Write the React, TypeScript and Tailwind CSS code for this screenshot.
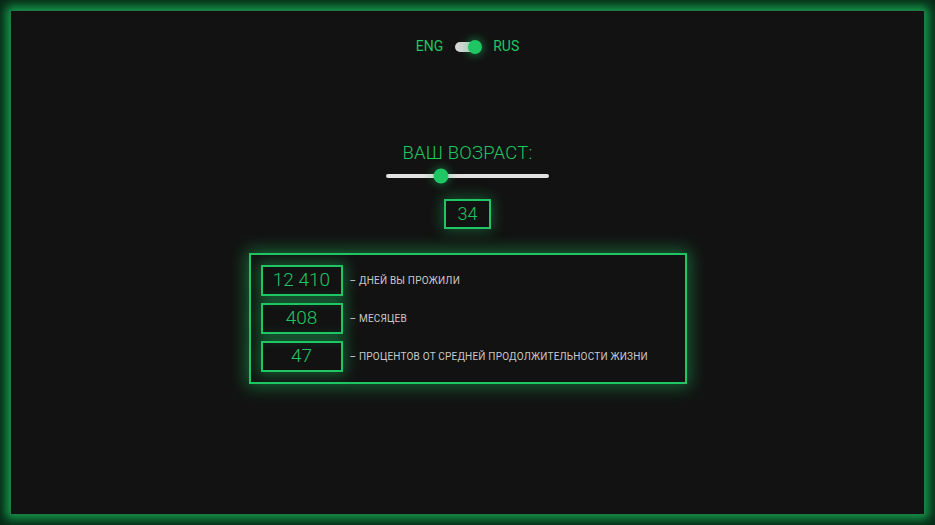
import { useState } from 'react';

const stats = [
  { value: '12 410', label: 'дней вы прожили' },
  { value: '408', label: 'месяцев' },
  { value: '47', label: 'процентов от средней продолжительности жизни' },
];

function LangToggle() {
  const [rus, setRus] = useState(true);
  return (
    <div className="flex items-center gap-3 text-[14px] text-[#1fc664]">
      <span>ENG</span>
      <button
        onClick={() => setRus(!rus)}
        className="relative w-[26px] h-[10px] rounded-full bg-[#d6d6d6]"
      >
        <span
          className={
            rus
              ? 'absolute top-[-2px] right-[-1px] w-[14px] h-[14px] rounded-full bg-[#1fc664] shadow-[0_0_8px_2px_rgba(31,198,100,0.45)]'
              : 'absolute top-[-2px] left-[-1px] w-[14px] h-[14px] rounded-full bg-[#1fc664] shadow-[0_0_8px_2px_rgba(31,198,100,0.45)]'
          }
        />
      </button>
      <span>RUS</span>
    </div>
  );
}

function AgeSlider({ age }: { age: number }) {
  const pct = (age / 100) * 100;
  return (
    <div className="relative w-[163px] h-[4px] rounded-full bg-[#e2e2e2]">
      <span
        className="absolute top-1/2 w-[15px] h-[15px] -translate-x-1/2 -translate-y-1/2 rounded-full bg-[#1fc664] shadow-[0_0_8px_2px_rgba(31,198,100,0.35)]"
        style={{ left: `${pct}%` }}
      />
    </div>
  );
}

export default function App() {
  const age = 34;
  return (
    <div className="w-[935px] h-[525px] p-[10px] bg-[#072615]" style={{ fontFamily: 'Roboto, "Liberation Sans", sans-serif' }}>
      <div className="h-full flex flex-col items-center bg-[#121212] shadow-[0_0_10px_4px_#15a04e] border border-[#1c7a42]">
        <div className="mt-[25px]">
          <LangToggle />
        </div>

        <h1 className="mt-[87px] text-[18.5px] font-light tracking-[0.2px] text-[#1fc664] uppercase leading-none">
          Ваш возраст:
        </h1>
        <div className="mt-[11px]">
          <AgeSlider age={age} />
        </div>

        <div className="mt-[21px] w-[47px] h-[30px] flex items-center justify-center border-2 border-[#1fc664] text-[18px] font-light text-[#1fc664] shadow-[0_0_14px_2px_rgba(31,198,100,0.35)]">
          {age}
        </div>

        <div className="mt-[24px] w-[438px] p-[10px] flex flex-col gap-[7px] border-2 border-[#1fc664] shadow-[0_0_16px_3px_rgba(31,198,100,0.45)]">
          {stats.map((s) => (
            <div key={s.value} className="flex items-center gap-[7px]">
              <div className="w-[82px] h-[31px] flex items-center justify-center border-2 border-[#1fc664] text-[19px] font-light text-[#1fc664] shadow-[0_0_14px_3px_rgba(31,198,100,0.4)]">
                {s.value}
              </div>
              <span className="whitespace-nowrap text-[10px] text-[#c9c9c9] uppercase tracking-[0.2px]">
                – {s.label}
              </span>
            </div>
          ))}
        </div>
      </div>
    </div>
  );
}
